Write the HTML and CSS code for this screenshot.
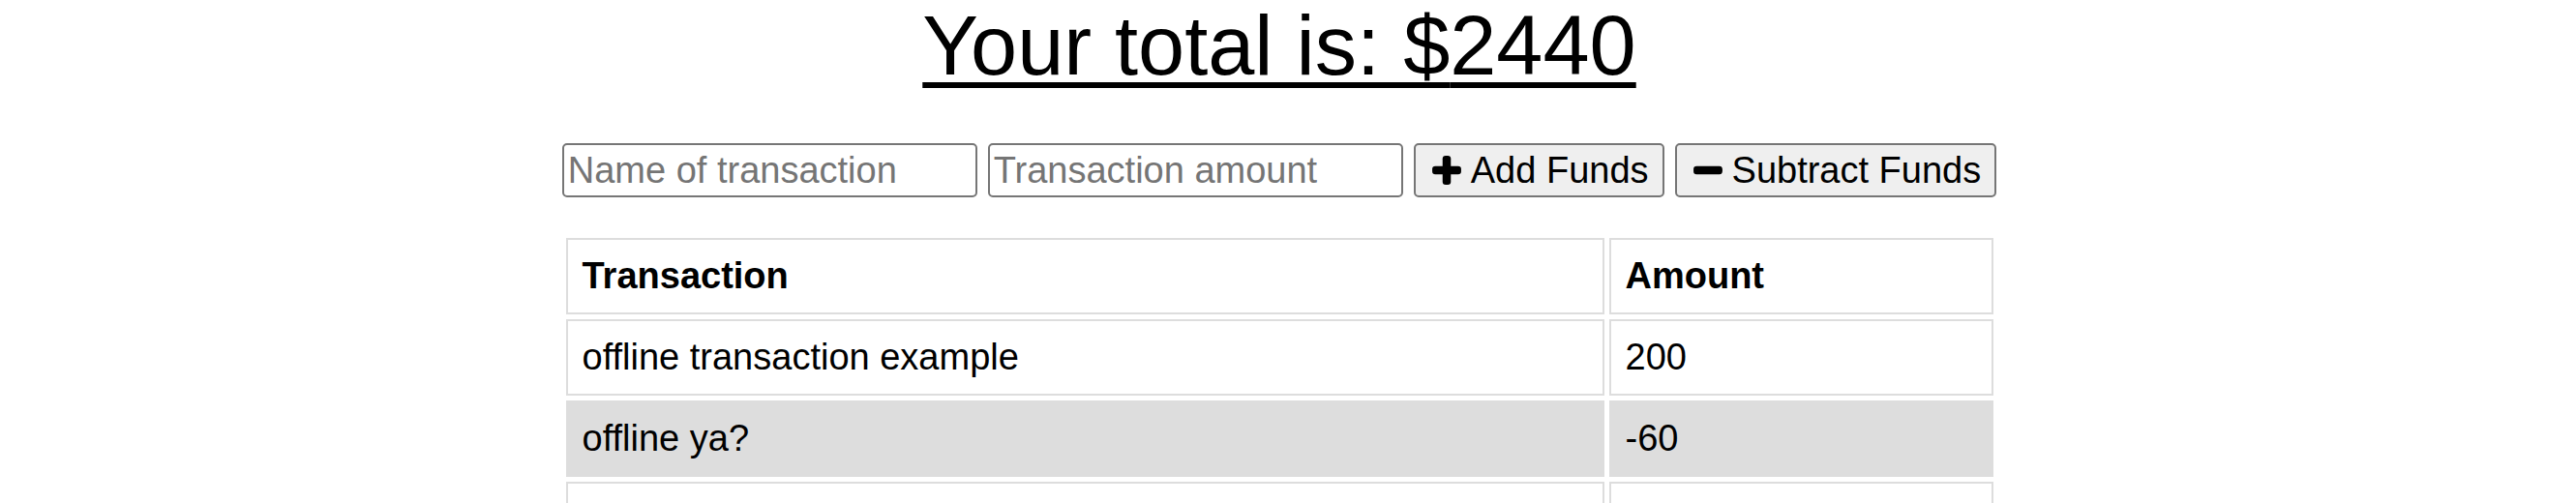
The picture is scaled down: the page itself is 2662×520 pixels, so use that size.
FILE: index.html
```html
<!DOCTYPE html>
<html lang="en">
<head>
<meta charset="utf-8">
<title>Budget Tracker</title>
<link rel="stylesheet" href="styles.css">
</head>
<body>
<div class="wrapper">
  <h1 class="total">Your total is: $<span>2440</span></h1>
  <div class="form">
    <input class="field" type="text" placeholder="Name of transaction">
    <input class="field" type="number" placeholder="Transaction amount">
    <button class="btn btn-add"><svg class="icon" viewBox="0 0 30 30"><rect x="11" y="1" width="8" height="28" rx="3"/><rect x="1" y="11" width="28" height="8" rx="3"/></svg>Add Funds</button>
    <button class="btn btn-sub"><svg class="icon" viewBox="0 0 30 30"><rect x="1" y="11" width="28" height="8" rx="3"/></svg>Subtract Funds</button>
  </div>
  <table class="ledger">
    <thead>
      <tr><th class="col-name">Transaction</th><th class="col-amt">Amount</th></tr>
    </thead>
    <tbody>
      <tr><td>offline transaction example</td><td>200</td></tr>
      <tr><td>offline ya?</td><td>-60</td></tr>
      <tr><td>rent</td><td>2300</td></tr>
    </tbody>
  </table>
</div>
</body>
</html>
```
FILE: styles.css
```css
html, body {
  margin: 0;
  padding: 0;
  background: #fff;
}
body {
  font-family: "Liberation Sans", Arial, Helvetica, sans-serif;
  color: #000;
  padding: 0 26px 0 8px;
}
.wrapper {
  width: 1485px;
  margin: 0 auto;
}
.total {
  margin: 0;
  font-size: 86.5px;
  line-height: 94px;
  font-weight: normal;
  text-align: center;
  text-decoration: underline;
  text-decoration-thickness: 6px;
  text-underline-offset: 8px;
}
.form {
  display: flex;
  justify-content: center;
  gap: 11px;
  margin-top: 54px;
}
.field {
  box-sizing: border-box;
  width: 429px;
  height: 56px;
  font-family: inherit;
  font-size: 38px;
  padding: 2px 4px;
  border: 2px solid #767676;
  border-radius: 5px;
  background: #fff;
  color: #000;
}
.field::placeholder {
  color: #757575;
}
.btn {
  box-sizing: border-box;
  height: 56px;
  display: flex;
  align-items: center;
  gap: 9px;
  font-family: inherit;
  font-size: 38px;
  padding: 0 14px 0 16px;
  border: 2px solid #767676;
  border-radius: 5px;
  background: #efefef;
  color: #000;
}
.icon {
  width: 32px;
  height: 32px;
  fill: #000;
  flex: none;
}
.ledger {
  width: 100%;
  margin-top: 37px;
  border-collapse: separate;
  border-spacing: 5px;
  font-size: 38px;
}
.ledger th,
.ledger td {
  text-align: left;
  padding: 15px;
  line-height: 45px;
  border: 2px solid #dddddd;
}
.ledger th {
  font-weight: bold;
}
.col-amt {
  width: 363px;
}
.ledger tbody tr:nth-child(even) td {
  background: #dddddd;
}
```
